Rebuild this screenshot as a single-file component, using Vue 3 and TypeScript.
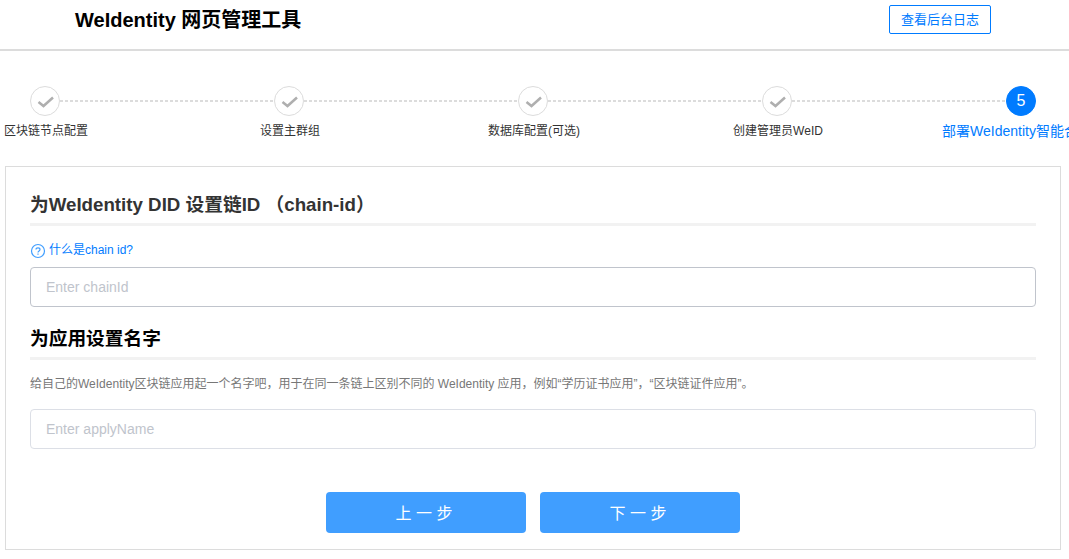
<script setup lang="ts">
import { ref } from 'vue'

const steps: string[] = [
  '区块链节点配置',
  '设置主群组',
  '数据库配置(可选)',
  '创建管理员WeID',
  '部署WeIdentity智能合约',
]
const current = 4
const chainId = ref('')
const applyName = ref('')
</script>

<template>
  <div class="page">
    <header class="header">
      <h1>WeIdentity 网页管理工具</h1>
      <button type="button" class="log-button">查看后台日志</button>
    </header>

    <ol class="steps">
      <li
        v-for="(label, index) in steps"
        :key="label"
        class="step"
        :class="{ active: index === current }"
      >
        <div class="marker">
          <span class="circle">
            <template v-if="index === current">{{ index + 1 }}</template>
            <svg v-else width="18" height="14" viewBox="0 0 18 14" aria-hidden="true">
              <path d="M2.5 8 L7.5 12 L17 3.5" />
            </svg>
          </span>
          <span class="label">{{ label }}</span>
        </div>
        <span v-if="index < steps.length - 1" class="line"></span>
      </li>
    </ol>

    <main class="card">
      <form @submit.prevent>
        <h3 class="chain-title"><label for="chain-id">为WeIdentity DID 设置链ID （chain-id）</label></h3>
        <a href="#" class="help">
          <svg width="16" height="18" viewBox="0 0 16 18" aria-hidden="true">
            <circle cx="8" cy="10" r="6.5" />
            <path d="M6 8.5 C6 6.2 10 6.2 10 8.5 C10 10 8 9.8 8 11.5" />
            <path d="M8 12.6 V13.8" />
          </svg>
          <span>什么是chain id?</span>
        </a>
        <input id="chain-id" v-model="chainId" class="chain-input" type="text" placeholder="Enter chainId" />

        <h3 class="name-title"><label for="apply-name">为应用设置名字</label></h3>
        <p class="hint">给自己的WeIdentity区块链应用起一个名字吧，用于在同一条链上区别不同的 WeIdentity 应用，例如“学历证书应用”，“区块链证件应用”。</p>
        <input id="apply-name" v-model="applyName" type="text" placeholder="Enter applyName" />

        <div class="actions">
          <button type="button">上 一 步</button>
          <button type="submit">下 一 步</button>
        </div>
      </form>
    </main>
  </div>
</template>

<style>
body {
  margin: 0;
  background: #fff;
  overflow-x: hidden;
}
</style>

<style scoped>
.page,
.page button,
.page input {
  font-family: 'Liberation Sans', 'Noto Sans CJK SC', sans-serif;
}

.page {
  overflow: hidden;
  padding-bottom: 9px;
}

.header {
  display: flex;
  align-items: flex-start;
  justify-content: space-between;
  box-sizing: border-box;
  height: 51px;
  padding: 5px 78px 0 75px;
  border-bottom: 2px solid #dcdcdc;
}

h1 {
  margin: 0;
  color: #000;
  font-size: 20px;
  line-height: 30px;
}

.log-button {
  height: 29px;
  padding: 0 11px;
  border: 1px solid #007bff;
  border-radius: 2px;
  background: #fff;
  color: #007bff;
  font-size: 13px;
  line-height: 27px;
}

.steps {
  display: flex;
  margin: 35px 33px 0 30px;
  padding: 0;
  list-style: none;
}

.step {
  display: flex;
  flex: 1;
}

.step:last-child {
  flex: none;
}

.marker {
  display: flex;
  flex-direction: column;
  align-items: center;
  width: 30px;
}

.circle {
  display: flex;
  align-items: center;
  justify-content: center;
  box-sizing: border-box;
  width: 30px;
  height: 30px;
  border: 1px solid #dcdcdc;
  border-radius: 50%;
}

.circle svg {
  fill: none;
  stroke: #afafaf;
  stroke-width: 2.5;
}

.label {
  margin-top: 5px;
  padding-left: 2px;
  color: #333;
  font-size: 12px;
  line-height: 20px;
  white-space: nowrap;
}

.active .circle {
  border-color: #007bff;
  background: #007bff;
  color: #fff;
  font-size: 16px;
}

.active .label {
  padding: 0 8px 0 0;
  color: #007bff;
  font-size: 14px;
}

.line {
  flex: 1;
  height: 2px;
  margin-top: 14px;
  background: repeating-linear-gradient(to right, #dcdcdc 0 3px, transparent 3px 5px);
}

.card {
  margin: 25px 8px 0 5px;
  padding: 24px 24px 16px;
  border: 1px solid #dcdcdc;
}

h3 {
  margin: 0;
  padding-bottom: 4px;
  border-bottom: 3px solid #f2f2f2;
  line-height: 28px;
}

.chain-title {
  color: #333;
}

.name-title {
  margin-top: 18px;
  color: #000;
}

.help {
  display: flex;
  align-items: center;
  gap: 3px;
  width: max-content;
  margin: 14px 0 7px;
  color: #007bff;
  font-size: 12px;
  line-height: 20px;
  text-decoration: none;
}

.help svg {
  fill: none;
  stroke: #409eff;
  stroke-width: 1.2;
}

input {
  display: block;
  box-sizing: border-box;
  width: 100%;
  height: 40px;
  padding: 0 15px;
  border: 1px solid #dcdfe6;
  border-radius: 4px;
  outline: none;
  background: #fff;
  color: #606266;
  font-size: 14px;
}

.chain-input {
  border-color: #c0c4cc;
}

input::placeholder {
  color: #c0c4cc;
}

.hint {
  margin: 14px 0 15px;
  color: #777;
  font-size: 12px;
  line-height: 20px;
}

.actions {
  display: flex;
  justify-content: center;
  gap: 14px;
  margin-top: 43px;
}

.actions button {
  width: 200px;
  height: 41px;
  padding: 0 4px 2px 0;
  border: 0;
  border-radius: 4px;
  background: #409eff;
  color: #fff;
  font-size: 16px;
}
</style>
